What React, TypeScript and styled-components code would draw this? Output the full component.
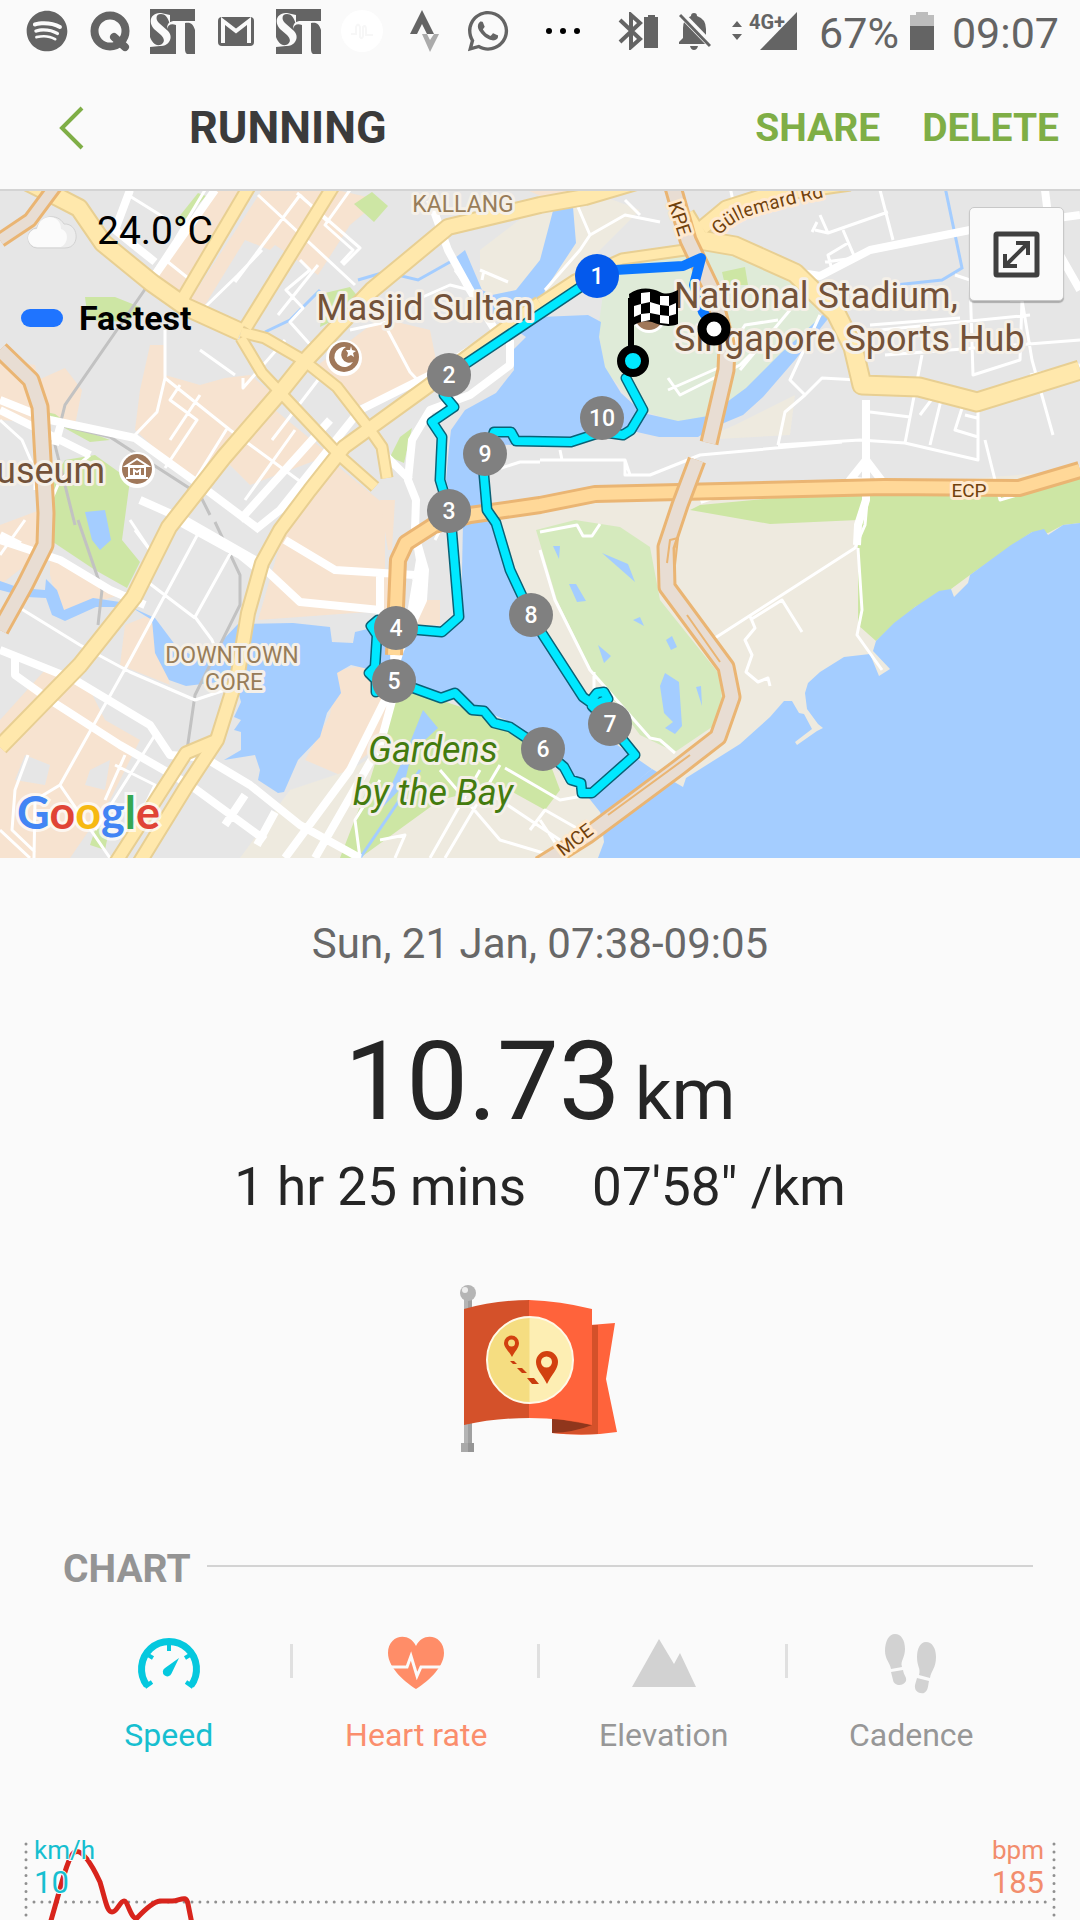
import React from "react";
import styled, { createGlobalStyle } from "styled-components";
import { FaSpotify, FaWhatsapp } from "react-icons/fa";

const GlobalStyle = createGlobalStyle`
  * { box-sizing: border-box; }
  body {
    margin: 0;
    background: #fafafa;
    color: #252525;
    font-family: Roboto, "Noto Sans", sans-serif;
  }
  button { border: 0; padding: 0; background: none; font: inherit; color: inherit; cursor: pointer; }
`;

const Page = styled.div`
  display: flex;
  flex-direction: column;
  overflow: hidden;
`;

/* ---------- status bar ---------- */

const StatusBar = styled.div`
  display: flex;
  align-items: center;
  justify-content: space-between;
  height: 62px;
  padding: 0 21px 0 15px;
  color: #646464;
`;

const StatusGroup = styled.div`
  display: flex;
  align-items: center;
`;

const StatusCell = styled.span`
  display: flex;
  align-items: center;
  justify-content: center;
  width: 63px;
  height: 62px;
`;

const MoreDots = styled.span`
  display: flex;
  gap: 8px;
  margin-left: 27px;
`;

const Dot = styled.i`
  width: 6px;
  height: 6px;
  border-radius: 50%;
  background: #000;
`;

const StatusIcons = styled.span`
  display: flex;
  align-items: center;
  gap: 20px;
  margin-right: 22px;
`;

const StatusText = styled.span`
  font-size: 43px;
  line-height: 62px;
  padding-top: 4px;
`;

const BatterySlot = styled.span`
  display: flex;
  margin: 0 18px 0 11px;
`;

/* ---------- title bar ---------- */

const TitleBar = styled.header`
  display: flex;
  align-items: center;
  height: 127px;
  padding: 4px 21px 0 59px;
`;

const BackButton = styled.button`
  display: flex;
  width: 130px;
`;

const Title = styled.h1`
  flex: 1;
  margin: 0;
  font-size: 45px;
  line-height: 54px;
  font-weight: 700;
  color: #3b3b3b;
`;

const Actions = styled.div`
  display: flex;
  gap: 42px;
`;

const ActionButton = styled.button`
  font-size: 39px;
  line-height: 48px;
  font-weight: 700;
  color: #7fae46;
`;

/* ---------- map ---------- */

const MapPanel = styled.section`
  position: relative;
  border-top: 2px solid #d4d4d4;
  font-family: Roboto, "Noto Sans", sans-serif;
`;

const MapSvg = styled.svg`
  display: block;
  width: 100%;
  height: auto;
`;

const MapLegend = styled.div`
  position: absolute;
  top: 16px;
  left: 21px;
  display: flex;
  flex-direction: column;
  gap: 43px;
  color: #000;
`;

const Weather = styled.div`
  display: flex;
  align-items: center;
  gap: 20px;
  padding-left: 6px;
  font-size: 39px;
  line-height: 48px;
`;

const Fastest = styled.div`
  display: flex;
  align-items: center;
  gap: 16px;
  font-size: 34px;
  line-height: 40px;
  font-weight: 700;
`;

const FastestSwatch = styled.i`
  width: 42px;
  height: 18px;
  border-radius: 9px;
  background: #1f74ff;
`;

const ExpandButton = styled.button`
  position: absolute;
  top: 16px;
  right: 16px;
  display: grid;
  place-items: center;
  width: 95px;
  height: 94px;
  border: 1px solid #c8c8c8;
  border-radius: 5px;
  background: #fafafa;
  box-shadow: 0 2px 1px rgba(0, 0, 0, 0.25);
`;

const GoogleMark = styled.div`
  position: absolute;
  left: 17px;
  bottom: 18px;
  font-family: Lato, "Open Sans", sans-serif;
  font-size: 45px;
  line-height: 56px;
  font-weight: 700;
  -webkit-text-stroke: 6px rgba(255, 255, 255, 0.7);
  paint-order: stroke fill;
`;

const Letter = styled.span<{ $tone: string }>`
  color: ${(p) => p.$tone};
`;

/* ---------- summary ---------- */

const Summary = styled.section`
  display: flex;
  flex-direction: column;
  align-items: center;
  padding-top: 61px;
`;

const When = styled.p`
  margin: 0;
  font-size: 42px;
  line-height: 50px;
  color: #686868;
`;

const Distance = styled.p`
  display: flex;
  align-items: baseline;
  gap: 14px;
  margin: 48px 0 0;
  font-size: 110px;
  line-height: 130px;
`;

const Unit = styled.span`
  font-size: 73px;
  line-height: 80px;
`;

const Facts = styled.p`
  display: flex;
  gap: 66px;
  margin: 9px 0 0;
  font-size: 53px;
  line-height: 62px;
`;

const Badge = styled.svg`
  margin-top: 42px;
  width: 220px;
  height: 210px;
`;

/* ---------- chart ---------- */

const ChartHeading = styled.div`
  display: flex;
  align-items: center;
  gap: 16px;
  margin: 76px 47px 0 63px;
`;

const ChartTitle = styled.h2`
  margin: 0;
  font-size: 39px;
  line-height: 46px;
  font-weight: 700;
  color: #949494;
`;

const Rule = styled.hr`
  flex: 1;
  margin: 0 0 6px;
  border: 0;
  border-top: 2px solid #d3d3d3;
`;

const Tabs = styled.div`
  display: grid;
  grid-template-columns: repeat(4, 1fr);
  margin: 39px 45px 0;
`;

const Tab = styled.button<{ $tone: string }>`
  display: flex;
  flex-direction: column;
  align-items: center;
  gap: 21px;
  font-size: 32px;
  line-height: 38px;
  color: ${(p) => p.$tone};

  &:not(:last-child) {
    background: linear-gradient(#e0e0e0, #e0e0e0) no-repeat right 13px / 3px 34px;
  }
`;

const TabIcon = styled.svg`
  width: 64px;
  height: 64px;
`;

const ChartPanel = styled.section`
  position: relative;
  margin-top: 82px;
`;

const ChartSvg = styled.svg`
  display: block;
  width: 100%;
  height: auto;
`;

const AxisLabels = styled.div`
  position: absolute;
  inset: 0 36px auto 34px;
  display: flex;
  justify-content: space-between;
`;

const AxisLabel = styled.div<{ $tone: string; $end?: boolean }>`
  display: flex;
  flex-direction: column;
  text-align: ${(p) => (p.$end ? "right" : "left")};
  color: ${(p) => p.$tone};
  -webkit-text-stroke: 2px #fafafa;
  paint-order: stroke fill;
`;

const AxisUnit = styled.span`
  font-size: 26px;
  line-height: 29px;
`;

const AxisValue = styled.span`
  font-size: 31px;
  line-height: 36px;
`;

/* ---------- map data ---------- */

const C = {
  land: "#e6e6e6",
  peach: "#f7e3d0",
  beige: "#eeeadf",
  park: "#cde6a4",
  golf: "#d5eabd",
  arena: "#dfebd8",
  water: "#a4cdff",
};

const areas: [string, string][] = [
  // built-up blocks
  [C.peach, "M217 190L250 190L180 300L152 275Z"],
  [C.peach, "M262 190L330 190L270 250L245 240L205 305L190 300Z"],
  [C.peach, "M305 190L337 190L380 200L350 225L318 275L268 240Z"],
  [C.peach, "M520 187L580 187L550 200Z"],
  [C.peach, "M380 318L430 330L440 380L350 408L318 365Z"],
  [C.peach, "M150 345L165 345L165 375L200 385L225 378L250 375L275 395L220 460L195 485L135 430L140 390Z"],
  [C.peach, "M0 360L35 365L38 380L65 368L82 390L75 425L0 420Z"],
  [C.peach, "M275 410L330 455L250 485L225 460Z"],
  [C.peach, "M330 460L385 505L385 570L400 575L395 610L258 620L290 510Z"],
  [C.peach, "M0 525L40 510L45 550L0 585Z"],
  [C.peach, "M50 555L120 595L60 612L50 575Z"],
  [C.peach, "M125 625L150 615L170 685L120 665Z"],
  [C.peach, "M45 670L90 690L105 720L140 740L110 800L70 858L0 858L0 720Z"],
  [C.peach, "M337 670L370 665L395 690L380 745L340 775L305 760L330 715Z"],
  [C.peach, "M420 600L440 600L440 625L412 625Z"],
  [C.land, "M25 755L50 765L45 785L15 780ZM90 770L110 760L105 790L85 785Z"],
  // reclaimed land
  [C.beige, "M480 250L545 200L600 195L640 210L600 250L545 300L480 300Z"],
  [C.beige, "M700 440L735 425L795 395L790 435Z"],
  [C.beige, "M490 515L600 490L700 500L1080 470L1080 560L870 858L590 858L600 800L480 520Z"],
  [C.beige, "M240 858L290 790L350 770L400 740L500 740L610 800L600 858Z"],
  // parks
  [C.park, "M85 297L115 297L140 307L128 322L88 320Z"],
  [C.park, "M198 193L206 196L180 225L178 218Z"],
  [C.park, "M372 192L388 206L374 222L354 204Z"],
  [C.park, "M325 293L350 287L365 305L320 327Z"],
  [C.park, "M400 437L412 428L404 463L390 457Z"],
  [C.park, "M65 460L95 455L130 480L122 540L140 562L127 588L95 570L50 540L52 480Z"],
  [C.park, "M25 407L55 414L70 425L110 440L90 442L50 420Z"],
  [C.park, "M95 830L110 825L105 850L90 845Z"],
  [C.park, "M398 690L440 700L500 720L545 750L560 790L545 810L500 785L440 800L360 858L340 858L370 780Z"],
  [C.park, "M700 505L860 490L870 493L1025 490L1080 475L1080 523L1063 525L1048 533L1032 532L970 575L951 589L915 607L876 641L858 625L858 520L770 524L690 510Z"],
  [C.golf, "M536 530L575 520L620 527L650 547L660 600L720 675L722 700L712 727L675 752L640 735L590 668L557 600Z"],
  [C.arena, "M605 280L640 255L725 247L790 275L825 320L700 430L640 410L605 370L598 330Z"],
  [C.park, "M722 272L745 267L748 285L725 285Z"],
  // water
  [C.water, "M598 858L604 842L600 810L652 769L683 787L686 778L740 744L770 717L784 701L792 701L799 713L804 714L812 729L795 742L797 745L817 731L823 728L818 724L807 709L805 693L808 683L820 672L844 657L870 654L879 676L890 669L873 651L876 641L894 623L915 607L939 591L951 589L954 597L968 583L970 575L1011 545L1032 532L1044 529L1048 535L1063 525L1080 523L1080 858Z"],
  [C.water, "M554 207L573 207L576 243L545 290L540 317L588 315L601 322L599 337L605 367L621 393L643 413L678 421L708 416L746 388L781 353L825 313L831 315L795 360L763 397L743 415L712 428L698 437L659 437L628 430L571 444L500 445L482 475L496 517L510 568L525 600L543 635L590 705L610 740L652 769L600 812L588 797L560 770L540 745L506 720L482 710L455 693L410 690L372 670L351 665L337 673L341 693L327 713L320 737L298 760L284 792L278 793L258 780L260 770L255 755L224 760L241 750L241 732L234 730L241 720L234 717L241 702L235 680L186 686L169 680L155 653L152 620L131 607L96 607L65 621L52 615L46 598L27 597L0 590L0 581L20 588L45 590L46 579L57 590L64 610L93 598L120 602L155 618L179 650L207 660L220 643L238 624L293 623L330 627L332 642L353 643L355 632L372 628L440 634L461 617L463 523L452 500L446 480L449 447L451 430L465 410L496 393L514 370L513 350L526 337L482 307L455 258L465 250L482 290L492 295L516 290L540 260Z"],
  [C.water, "M85 512L105 510L111 540L100 550L92 540Z"],
  [C.water, "M423 710L438 728L412 752L404 785L380 810L405 755Z"],
  [C.water, "M553 546L560 546L559 559ZM602 553L628 564L635 582ZM569 584L576 584L586 601L577 602ZM633 620L640 617L644 626ZM598 645L611 656L604 663ZM666 640L672 636L677 647L671 650ZM665 673L679 682L682 726L675 734L665 728L673 722L664 713L660 686ZM696 687L701 686L702 706Z"],
  [C.peach, "M380 500L395 500L392 550L388 550Z"],
];

const minorRoads = [
  "M205 190L175 240L152 275", "M258 195L355 285", "M297 193L360 248L343 265", "M350 190L325 225L353 250L341 263",
  "M262 250L238 275L205 307", "M235 282L300 195L328 222", "M168 262L188 278", "M128 195L165 218",
  "M300 260L310 270L286 290L303 308L290 322L315 350", "M318 265L278 315", "M285 340L243 388L243 378",
  "M165 330L165 378L157 412L135 435", "M165 378L230 430L305 485", "M180 385L170 400L197 420L165 468", "M200 395L170 440",
  "M228 427L195 480", "M295 430L245 500", "M235 375L200 350", "M0 420L22 440L35 470L35 490", "M90 455L60 480L45 515",
  "M385 325L410 372L425 388", "M318 380L272 440", "M400 307L450 285L470 290", "M405 318L350 330", "M470 290L455 270",
  "M200 530L130 660L60 785L35 800L34 858", "M235 545L195 617L212 640L220 660", "M145 580L195 618", "M15 605L80 645L130 672L195 700L225 690",
  "M0 555L25 520", "M135 530L150 550L130 520", "M28 755L15 790L12 830L35 852", "M60 785L110 858", "M125 755L105 800", "M115 765L155 785L120 858",
  "M155 735L95 830", "M440 770L500 840L560 858", "M480 770L430 858", "M500 765L445 858", "M505 768L560 800L588 795", "M470 780L560 840",
  "M540 820L560 850L580 830L545 810L530 830", "M360 858L355 820L380 780", "M380 840L405 835L395 858",
  "M575 200L590 235L580 250L545 290", "M590 235L625 215L660 222", "M625 200L640 215", "M730 187L735 210",
  "M815 230L828 233L888 212", "M820 215L828 233M812 232L817 222", "M880 190L893 240", "M843 230L855 258L825 262", "M848 243L828 255L832 270",
  "M955 275L970 280L973 375L1020 360L1022 300L1010 300", "M850 333L1030 315", "M885 355L1080 340", "M870 325L960 318", "M1022 300L1032 360L1053 435", "M1030 375L1080 365",
  "M820 315L790 380L805 395L785 412L778 445", "M805 395L822 378L858 380", "M778 445L860 440L905 443L978 460L978 405", "M922 355L905 443", "M943 392L930 445", "M870 412L910 417M920 415L935 395",
  "M963 405L955 430L978 437M965 415L977 418", "M668 390L718 368L745 325L778 320", "M668 378L680 395L740 365L775 330", "M740 370L765 340L790 310",
  "M540 460L625 460L630 475L650 475L700 455L842 442", "M560 450L562 460", "M625 460L625 475L635 475",
  "M540 532L577 525L583 536L592 536L600 524", "M540 550L555 600L590 670L650 738L660 740L675 753",
  "M715 638L855 548L865 525L868 490", "M750 616L755 628L745 640L752 655L746 672L758 682L768 678L770 686M750 620L782 600L802 632",
  "M858 548L862 610L857 635L882 670", "M594 672L594 690", "M495 470L520 462L540 462", "M435 540L445 520",
  "M0 830L30 858", "M985 440L1000 500L1050 485", "M480 270L508 282M484 270L482 280",
];

const mediumRoads = [
  "M130 190L115 230L155 262", "M215 190L155 275", "M430 200L448 250L470 290L497 333",
  "M497 333L430 375L360 410L320 460L280 510L255 530", "M510 340L510 365L470 395L430 410L412 440L408 480L416 500L415 530L420 560L410 620",
  "M0 400L50 420L135 438L200 485L260 530", "M0 410L40 430L90 455M62 420L55 445", "M140 500L185 520L255 560L300 602L380 610",
  "M180 522L240 555L265 575", "M285 540L335 570L415 575L420 590L405 625", "M380 575L380 615", "M415 535L425 570L423 600L400 650L385 700L350 770L285 858", "M394 650L395 690L380 745L315 858",
  "M0 540L60 560L110 590L145 605", "M0 650L75 680L150 725L170 755L195 757", "M15 655L15 675L50 700L120 745L190 785L265 840", "M200 755L250 785L300 825L360 858",
  "M245 795L225 825M275 812L257 845", "M795 272L820 276L870 250L970 230L1080 215", "M866 400L866 500L858 525L857 545", "M866 460L850 480L885 485L866 460",
  "M1045 190L1048 215", "M1060 255L1080 290", "M450 410L430 425", "M380 450L410 480", "M0 535L20 545M240 520L330 420", "M700 500L730 490",
];

const yellowRoads: [number, string][] = [
  [12, "M253 180L182 300"],
  [12, "M337 180L246 327"],
  [10, "M241 338L262 373L341 457L375 487"],
  [10, "M241 332L265 338L303 360L337 387L368 427L382 447L387 478"],
  [17, "M24 180L52 194L79 208L103 243L152 283L186 307L241 332"],
  [13, "M540 303L490 340L427 387L344 447L310 490L280 530L262 563L248 613L238 673L217 740L186 787L138 865"],
  [12, "M217 740L186 753L114 865"],
  [15, "M643 180L585 197L540 205L448 227L372 290L306 360L282 390L224 457L180 513L169 527L134 597L80 665L0 747"],
  [10, "M540 303L575 280L622 259L692 249"],
  [14, "M702 228L726 208L767 195L850 183"],
  [18, "M685 215L700 240L735 246L795 273L836 313L853 347L862 385L919 387L977 402L1080 370"],
];

const tunnelRoads: [number, string][] = [
  [12, "M0 240L30 220L56 185"],
  [15, "M0 350L31 380L40 407L46 513L45 545L25 585L0 630"],
  [15, "M671 180L688 240L712 290L727 347L726 370L709 443"],
  [15, "M697 460L680 505L666 547L667 587L726 667L732 697L718 737L678 768L588 835L540 865"],
];

const expressway = "M394 655L396 607L398 560L406 543L434 525L470 515L540 505L595 494L884 487L1019 488L1080 470";

const routePath =
  "M597 276L449 375L444 395L454 407L432 422L442 437L440 480L449 510L452 533L459 617L442 632L396 628L378 620L371 626L377 635L375 667L369 673L376 680L376 692L394 681L441 698L455 693L472 710L484 711L494 723L510 727L543 749L564 767L571 780L581 783L582 793L592 793L635 755L610 724L592 706L608 699L604 692L597 693L590 702L583 697L543 635L531 615L510 570L496 523L487 510L483 465L494 432L511 432L516 441L571 442L602 432L623 435L631 430L643 410L626 378";

const waypoints: [number, number, number][] = [
  [2, 449, 375], [3, 449, 511], [4, 396, 628], [5, 394, 681], [6, 543, 749],
  [7, 610, 724], [8, 531, 615], [9, 485, 454], [10, 602, 418],
];

const PoiLabel = styled.text`
  font-size: 36px;
  fill: #735239;
  stroke: #f5f0e8;
  stroke-width: 6px;
  stroke-linejoin: round;
  paint-order: stroke;
`;

const DistrictLabel = styled(PoiLabel)`
  font-size: 23px;
  fill: #987d59;
`;

const RoadLabel = styled(PoiLabel)`
  font-size: 19px;
  fill: #70410c;
  stroke: #ffe9cf;
`;

const ParkLabel = styled(PoiLabel)`
  font-style: italic;
  fill: #447b0e;
`;

const MarkerText = styled.text`
  font-size: 23px;
  font-weight: 500;
  fill: #fff;
`;

function Waypoint({ n, x, y, color = "#808080" }: { n: number; x: number; y: number; color?: string }) {
  return (
    <g>
      <circle cx={x} cy={y} r="22" fill={color} />
      <MarkerText x={x} y={y + 8} textAnchor="middle">{n}</MarkerText>
    </g>
  );
}

function RunMap() {
  return (
    <MapSvg viewBox="0 191 1080 667" role="img" aria-label="Map of the run">
      <defs>
        <path id="guillemard" d="M719 236Q731 223 746 217Q780 206 840 194" />
      </defs>
      <rect x="0" y="185" width="1080" height="680" fill={C.land} />
      {areas.map(([fill, d], i) => <path key={i} d={d} fill={fill} />)}
      <g fill="none" stroke="#a4cdff" strokeWidth="3">
        <path d="M358 280L385 272L418 280L450 262M265 332L290 320L320 290" />
        <path d="M945 187L962 268L942 280L895 285M360 858L420 770" />
      </g>
      <path d="M148 285L65 405L55 445L75 525M78 520L102 590L98 625M60 425L110 437L200 495L210 515M215 522L240 575L240 605L195 695L187 750" fill="none" stroke="#c2c2c2" strokeWidth="3" />
      <g fill="none" stroke="#fff" strokeLinejoin="round">
        <path d={minorRoads.join("")} strokeWidth="3" />
        <path d={mediumRoads.join("")} strokeWidth="8" />
      </g>
      <g fill="none" strokeLinejoin="round">
        {yellowRoads.map(([w, d]) => <path key={d} d={d} stroke="#e8cf92" strokeWidth={w + 3} />)}
        {yellowRoads.map(([w, d]) => <path key={d} d={d} stroke="#ffe8ac" strokeWidth={w - 1} />)}
        <path d={expressway} stroke="#eab573" strokeWidth="18" />
        <path d={expressway} stroke="#ffd898" strokeWidth="12" />
        {tunnelRoads.map(([w, d]) => <path key={d} d={d} stroke="#eab573" strokeWidth={w + 4} />)}
        {tunnelRoads.map(([w, d]) => <path key={d} d={d} stroke="#e8ddd3" strokeWidth={w - 2} />)}
        <path d="M667 563L670 540L678 538L675 565M687 615L720 662M690 755L608 815" stroke="#eab573" strokeWidth="2" />
      </g>

      <g fill="none" strokeLinejoin="round" strokeLinecap="round">
        <path d={routePath} stroke="#096277" strokeWidth="11" />
        <path d={routePath} stroke="#00e8ff" strokeWidth="8" />
        <path d="M712 325L703 312L694 285L701 258L683 266L615 270" stroke="#0b77ff" strokeWidth="10" />
      </g>

      <circle cx="649" cy="316" r="17" fill="#fff" />
      <circle cx="649" cy="316" r="14" fill="#a0785a" />
      <DistrictLabel x="463" y="212" textAnchor="middle">KALLANG</DistrictLabel>
      <DistrictLabel x="232" y="663" textAnchor="middle">DOWNTOWN</DistrictLabel>
      <DistrictLabel x="234" y="690" textAnchor="middle">CORE</DistrictLabel>
      <PoiLabel x="425" y="320" textAnchor="middle">Masjid Sultan</PoiLabel>
      <PoiLabel x="105" y="483" textAnchor="end">Museum</PoiLabel>
      <PoiLabel x="674" y="308">National Stadium,</PoiLabel>
      <PoiLabel x="674" y="351">Singapore Sports Hub</PoiLabel>
      <ParkLabel x="433" y="762" textAnchor="middle">Gardens</ParkLabel>
      <ParkLabel x="433" y="805" textAnchor="middle">by the Bay</ParkLabel>
      <RoadLabel x="969" y="497" textAnchor="middle">ECP</RoadLabel>
      <RoadLabel transform="translate(668 204) rotate(72)">KPE</RoadLabel>
      <RoadLabel transform="translate(563 857) rotate(-37)">MCE</RoadLabel>
      <RoadLabel><textPath href="#guillemard">Güllemard Rd</textPath></RoadLabel>

      <g>
        <circle cx="344" cy="358" r="18" fill="#fff" />
        <circle cx="344" cy="357" r="15" fill="#a0785a" />
        <path d="M346 347A10 10 0 1 0 353 362A8 8 0 1 1 346 347Z" fill="#fff" />
        <path d="M351 346L352 350L356 351L353 353L354 357L351 355L347 357L348 353L346 350L350 350Z" fill="#fff" />
        <circle cx="137" cy="470" r="18" fill="#fff" />
        <circle cx="137" cy="469" r="15" fill="#a0785a" />
        <path d="M137 459L126 466L148 466ZM129 467H145V476H129ZM126 478H148" fill="none" stroke="#fff" strokeWidth="2" />
        <path d="M134 475V470L137 472L140 470V475" fill="none" stroke="#fff" strokeWidth="2" />
      </g>

      {waypoints.map(([n, x, y]) => <Waypoint key={n} n={n} x={x} y={y} />)}
      <Waypoint n={1} x={597} y={276} color="#0459ec" />

      <circle cx="714" cy="329" r="12" fill="#fff" stroke="#000" strokeWidth="9" />
      <path d="M631 298V348" stroke="#000" strokeWidth="6" />
      <path d="M629 294C640 286 652 288 660 292C666 295 672 293 678 290V324C668 328 660 325 652 322C644 320 638 322 631 327Z" fill="#000" />
      <g fill="#fff">
        <path d="M641 293L650 292V302L641 304Z M660 296L669 296V306L660 305Z" />
        <path d="M634 306L641 304V314L634 317Z M650 302L660 305V315L650 313Z M669 306L676 303V314L669 316Z" />
        <path d="M641 314L650 313V320L641 322Z M660 315L669 316V324L660 323Z" />
      </g>
      <circle cx="633" cy="361" r="12" fill="#00e8ff" stroke="#000" strokeWidth="8" />
    </MapSvg>
  );
}

/* ---------- status icons ---------- */

const QIcon = () => (
  <svg width="40" height="42" viewBox="0 0 40 42" fill="none" stroke="#646464">
    <circle cx="20" cy="21" r="15.500" strokeWidth="8" />
    <path d="M24 27L35 37" strokeWidth="8" strokeLinecap="round" />
  </svg>
);

const StIcon = () => (
  <svg width="45" height="45" viewBox="0 0 45 45">
    <rect width="45" height="45" fill="#646464" />
    <path d="M20 6V16C18 8 15 5 11 5C6 5 5 10 9 14L18 22C24 28 19 38 10 37L0 38V28C2 33 5 37 10 36C15 34 15 30 11 26L4 20C-3 12 2 3 11 4Z" fill="#fafafa" />
    <path d="M17 20C17 14 20 12 25 12H45V21C43 15 41 13 35 14V40Q35 44 37 45H26V16C21 14 18 16 17 20Z" fill="#fafafa" />
  </svg>
);

const MailIcon = () => (
  <svg width="38" height="31" viewBox="0 0 38 31">
    <rect x="1" y="1" width="36" height="29" rx="4" fill="#646464" />
    <path d="M6 27V5L19 15L32 5V27" fill="none" stroke="#fafafa" strokeWidth="4" />
  </svg>
);

const PulseIcon = () => (
  <svg width="42" height="42" viewBox="0 0 42 42" fill="none">
    <circle cx="21" cy="21" r="21" fill="#fff" />
    <path d="M10 24H15V17Q17 12 19 17V27Q21 30 22 26V17Q25 14 25 20V25H32" stroke="#f7f7f7" strokeWidth="2" />
  </svg>
);

const StravaIcon = () => (
  <svg width="29" height="42" viewBox="0 0 29 42">
    <path d="M12 0L24 24H17L12 14L7 24H0Z" fill="#646464" />
    <path d="M12 24H17L20 30L24 24H29L20 42Z" fill="#ababab" />
  </svg>
);

const BluetoothIcon = () => (
  <svg width="41" height="38" viewBox="0 0 41 38">
    <path d="M2 8L22 27L13 35V3L22 11L2 30" fill="none" stroke="#646464" strokeWidth="4" />
    <path d="M26 5H30V3H37V5H40V36H26Z" fill="#646464" />
  </svg>
);

const BellOffIcon = () => (
  <svg width="32" height="38" viewBox="0 0 32 38">
    <path d="M12 4Q12 1 15 1Q18 1 18 4Q27 7 27 17V26L31 32H0V30L4 26V16Q4 7 12 4ZM11 34H19Q18 38 15 38Q12 38 11 34Z" fill="#646464" />
    <path d="M1 1L32 33" stroke="#fafafa" strokeWidth="7" />
    <path d="M1 3L31 34" stroke="#646464" strokeWidth="3" />
  </svg>
);

const SignalText = styled.text`
  font-family: Roboto, "Noto Sans", sans-serif;
  font-size: 20px;
  font-weight: 700;
  fill: #646464;
`;

const SignalIcon = () => (
  <svg width="66" height="40" viewBox="0 0 66 40">
    <path d="M6 10L11 16H1ZM6 29L1 23H11Z" fill="#646464" />
    <path d="M66 1V39H29Z" fill="#646464" />
    <SignalText x="18" y="18">4G+</SignalText>
  </svg>
);

const BatteryIcon = () => (
  <svg width="24" height="38" viewBox="0 0 24 38">
    <path d="M0 3H6V0H18V3H24V15H0Z" fill="#bdbdbd" />
    <path d="M0 14H24V38H0Z" fill="#646464" />
  </svg>
);

/* ---------- badge ---------- */

function RouteBadge() {
  return (
    <Badge viewBox="0 0 220 210" role="img" aria-label="Route badge">
      <path d="M34 38H42V184H34Z" fill="#b4b4b4" />
      <path d="M38 38H42V184H38Z" fill="#a0a0a0" />
      <path d="M31 183H44V192H31Z" fill="#a9a9a9" />
      <path d="M38 183H44V192H38Z" fill="#959595" />
      <circle cx="38" cy="33" r="8" fill="#b5b5b5" />
      <circle cx="35" cy="30" r="3" fill="#eee" />
      <path d="M160 65L185 63L176 119L187 172Q155 177 122 173V158H160Z" fill="#ff633b" />
      <path d="M160 65H168V174Q145 175 122 173V158H160Z" fill="#d4512a" />
      <path d="M122 158L162 165Q145 172 122 173Z" fill="#90361c" />
      <path d="M34 49Q65 40 100 40V158Q65 158 34 165Z" fill="#d4512a" />
      <path d="M99 40Q130 41 162 49V165Q135 158 99 158Z" fill="#ff633b" />
      <circle cx="100" cy="100" r="43" fill="#fdeeb3" />
      <path d="M99.500 57A43 43 0 0 0 99.500 143Z" fill="#f5dd81" />
      <circle cx="100" cy="100" r="43" fill="none" stroke="#fff8e7" strokeWidth="2" />
      <path fillRule="evenodd" d="M82 97C79 91 74 88 74 83A7.500 7.500 0 0 1 89 83C89 88 85 91 82 97ZM78 83A3.500 3.500 0 1 0 85 83A3.500 3.500 0 1 0 78 83Z" fill="#d2400f" />
      <path fillRule="evenodd" d="M117 124C112 114 106 109 106 102A11 11 0 0 1 128 102C128 109 122 114 117 124ZM111 102A5.500 5.500 0 1 0 122 102A5.500 5.500 0 1 0 111 102Z" fill="#d2400f" />
      <path d="M80 101H84L87 104H83ZM87 108H92L97 113H92ZM97 118H104L109 124H102Z" fill="#c93c0d" />
    </Badge>
  );
}

/* ---------- tab icons ---------- */

const SpeedIcon = () => (
  <TabIcon viewBox="0 0 64 64" fill="none" stroke="#05c8de">
    <path d="M10 54.500A27.500 27.500 0 1 1 54 54.500" strokeWidth="7" />
    <path d="M32 13V20M11 24L16 27M53 24L48 27M8 56L15 51M56 56L49 51" strokeWidth="4" />
    <path d="M42 27L34.500 42.500A4.500 4.500 0 1 1 28 37Z" fill="#05c8de" stroke="none" />
  </TabIcon>
);

const HeartIcon = () => (
  <TabIcon viewBox="0 0 64 64" fill="none">
    <path d="M32 58C24 53 4 38 4 22C4 4 25 0 32 15C39 0 60 4 60 22C60 38 40 53 32 58Z" fill="#ff8d68" />
    <path d="M2 36H23L27 25L33 45L37 36H62" stroke="#fafafa" strokeWidth="3" />
  </TabIcon>
);

const MountainIcon = () => (
  <TabIcon viewBox="0 0 64 64">
    <path d="M0 56L27 8L42 33L48 22L64 56Z" fill="#d2d2d2" />
  </TabIcon>
);

const FeetIcon = () => (
  <TabIcon viewBox="0 0 64 64" fill="#d2d2d2">
    <path d="M16 3C10 3 6 10 6 20C6 28 11 32 12 38L23 36C21 30 26 27 26 18C26 9 22 3 16 3Z" />
    <path d="M12 41L24 39C25 45 28 46 27 50C24 56 15 55 14 49Z" />
    <path d="M47 11C41 11 38 18 38 26C38 36 42 37 40 44L51 47C52 40 57 37 57 26C57 17 53 11 47 11Z" />
    <path d="M38 47L50 50C49 55 49 60 45 62C40 63 35 60 36 54Z" />
  </TabIcon>
);

const tabs = [
  { label: "Speed", tone: "#16bfd0", Icon: SpeedIcon },
  { label: "Heart rate", tone: "#fa8e6d", Icon: HeartIcon },
  { label: "Elevation", tone: "#979797", Icon: MountainIcon },
  { label: "Cadence", tone: "#979797", Icon: FeetIcon },
];

const googleLetters: [string, string][] = [
  ["G", "#4285f4"], ["o", "#e04436"], ["o", "#f6b913"], ["g", "#4285f4"], ["l", "#34a853"], ["e", "#e04436"],
];

export default function App() {
  return (
    <Page>
      <GlobalStyle />
      <StatusBar>
        <StatusGroup>
          <StatusCell><FaSpotify size={42} /></StatusCell>
          <StatusCell><QIcon /></StatusCell>
          <StatusCell><StIcon /></StatusCell>
          <StatusCell><MailIcon /></StatusCell>
          <StatusCell><StIcon /></StatusCell>
          <StatusCell><PulseIcon /></StatusCell>
          <StatusCell><StravaIcon /></StatusCell>
          <StatusCell><FaWhatsapp size={46} /></StatusCell>
          <MoreDots><Dot /><Dot /><Dot /></MoreDots>
        </StatusGroup>
        <StatusGroup>
          <StatusIcons>
            <BluetoothIcon />
            <BellOffIcon />
            <SignalIcon />
          </StatusIcons>
          <StatusText>67%</StatusText>
          <BatterySlot><BatteryIcon /></BatterySlot>
          <StatusText>09:07</StatusText>
        </StatusGroup>
      </StatusBar>

      <TitleBar>
        <BackButton aria-label="Back">
          <svg width="26" height="44" viewBox="0 0 26 44" fill="none">
            <path d="M23 2L3 22L23 42" stroke="#7fae46" strokeWidth="4" />
          </svg>
        </BackButton>
        <Title>RUNNING</Title>
        <Actions>
          <ActionButton>SHARE</ActionButton>
          <ActionButton>DELETE</ActionButton>
        </Actions>
      </TitleBar>

      <MapPanel>
        <RunMap />
        <MapLegend>
          <Weather>
            <svg width="50" height="36" viewBox="0 0 50 36">
              <path d="M10 35A9 10 0 0 1 10 15C13 3 30 -1 37 11C52 10 54 35 38 35Z" fill="#ededed" stroke="#d2d2d2" />
              <path d="M10 34A9 9 0 0 1 10 16C13 -1 34 1 34 16C44 19 40 34 32 34Z" fill="#fbfbfb" />
            </svg>
            24.0°C
          </Weather>
          <Fastest><FastestSwatch />Fastest</Fastest>
        </MapLegend>
        <ExpandButton aria-label="Expand map">
          <svg width="47" height="47" viewBox="0 0 47 47" fill="none" stroke="#3f3f3f">
            <rect x="3" y="3" width="41" height="41" rx="1" strokeWidth="5" />
            <path d="M23 12H35V24M35 12L12 35M12 23V35H24" strokeWidth="4" />
          </svg>
        </ExpandButton>
        <GoogleMark>
          {googleLetters.map(([ch, tone], i) => <Letter key={i} $tone={tone}>{ch}</Letter>)}
        </GoogleMark>
      </MapPanel>

      <Summary>
        <When>Sun, 21 Jan, 07:38-09:05</When>
        <Distance>10.73<Unit>km</Unit></Distance>
        <Facts><span>1 hr 25 mins</span><span>07'58" /km</span></Facts>
        <RouteBadge />
      </Summary>

      <ChartHeading>
        <ChartTitle>CHART</ChartTitle>
        <Rule />
      </ChartHeading>

      <Tabs>
        {tabs.map(({ label, tone, Icon }) => (
          <Tab key={label} $tone={tone}><Icon />{label}</Tab>
        ))}
      </Tabs>

      <ChartPanel>
        <ChartSvg viewBox="0 0 1080 84" fill="none">
          <g stroke="#909090" strokeWidth="3" strokeLinecap="round" strokeDasharray="0 7.900">
            <path d="M26 8V84M34 66H1046M1054 8V84" />
          </g>
          <path d="M50 88L60 53Q70 16 75 16Q84 12 100 46C106 66 107 76 112 76S120 65 124 65S131 84 137 82Q152 66 160 65H172C180 65 186 58 188 68L192 88" stroke="#d8241c" strokeWidth="5" />
        </ChartSvg>
        <AxisLabels>
          <AxisLabel $tone="#16bfd0"><AxisUnit>km/h</AxisUnit><AxisValue>10</AxisValue></AxisLabel>
          <AxisLabel $tone="#f28d6d" $end><AxisUnit>bpm</AxisUnit><AxisValue>185</AxisValue></AxisLabel>
        </AxisLabels>
      </ChartPanel>
    </Page>
  );
}
